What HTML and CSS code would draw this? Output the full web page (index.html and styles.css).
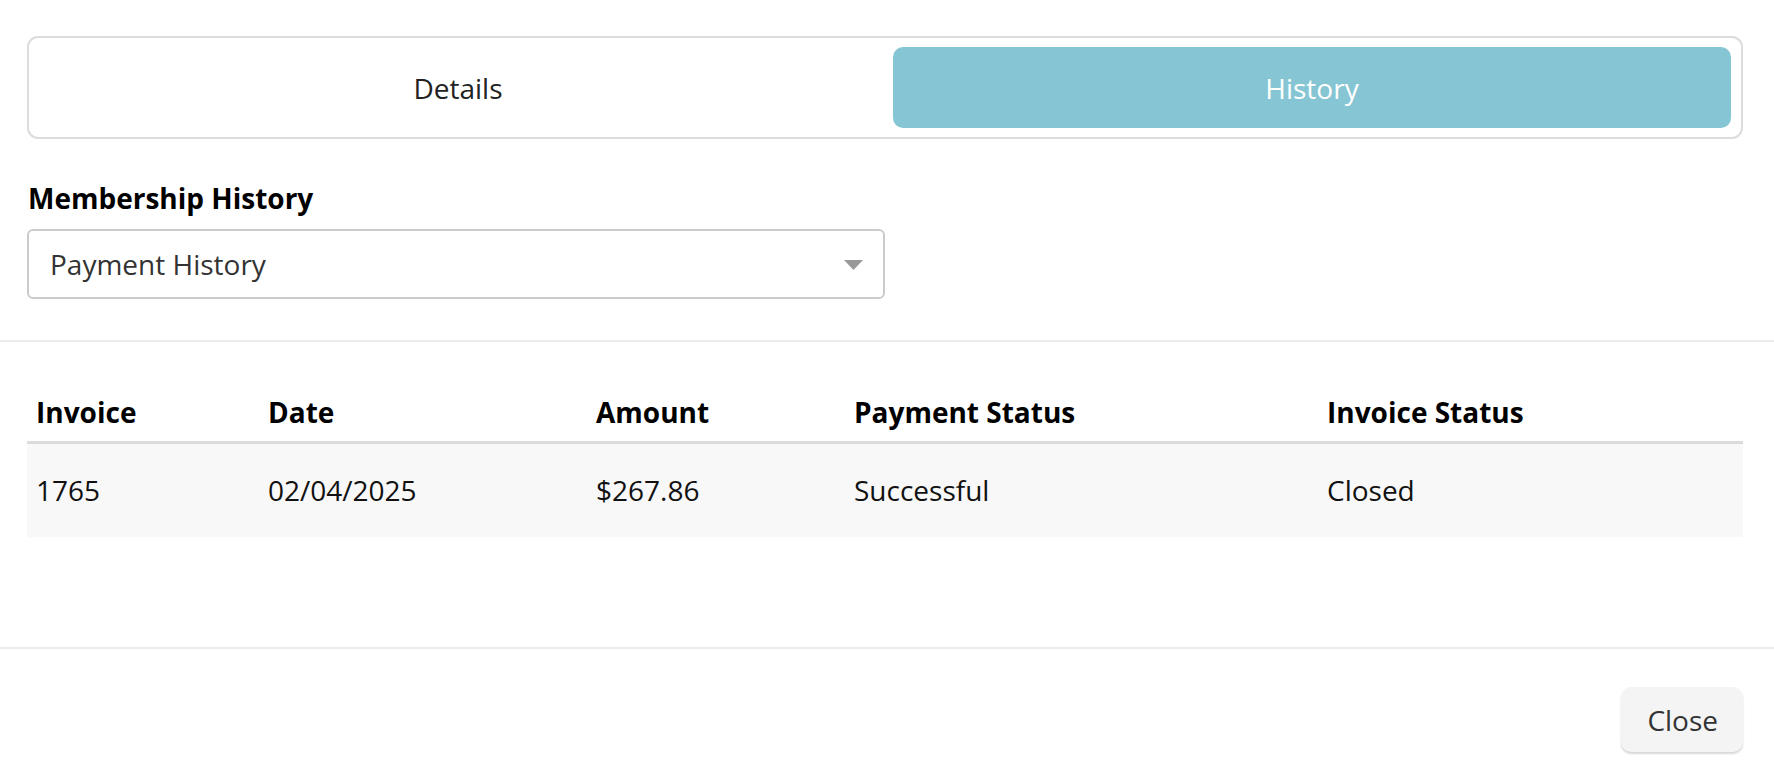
FILE: index.html
```html
<!DOCTYPE html>
<html lang="en">
<head>
<meta charset="utf-8">
<title>Membership History</title>
<link rel="stylesheet" href="styles.css">
</head>
<body>
<div class="modal">
  <section class="top">
    <div class="tabs">
      <button class="tab">Details</button>
      <button class="tab tab-active">History</button>
    </div>
    <label class="field-label">Membership History</label>
    <div class="select">
      <span class="select-value">Payment History</span>
      <svg class="caret" width="19" height="10" viewBox="0 0 19 10"><polygon points="0,0 19,0 9.5,10" fill="#999"/></svg>
    </div>
  </section>
  <div class="divider"></div>
  <section class="table-wrap">
    <table class="history">
      <colgroup>
        <col class="c-invoice">
        <col class="c-date">
        <col class="c-amount">
        <col class="c-pay">
        <col class="c-inv">
      </colgroup>
      <thead>
        <tr>
          <th>Invoice</th>
          <th>Date</th>
          <th>Amount</th>
          <th>Payment Status</th>
          <th>Invoice Status</th>
        </tr>
      </thead>
      <tbody>
        <tr>
          <td>1765</td>
          <td>02/04/2025</td>
          <td>$267.86</td>
          <td>Successful</td>
          <td>Closed</td>
        </tr>
      </tbody>
    </table>
  </section>
  <div class="divider"></div>
  <footer class="footer">
    <button class="btn-close">Close</button>
  </footer>
</div>
</body>
</html>
```

FILE: styles.css
```css
* { box-sizing: border-box; }

html, body {
  margin: 0;
  padding: 0;
  background: #ffffff;
}

body {
  font-family: "Open Sans", "Liberation Sans", sans-serif;
  font-size: 28px;
  line-height: 38px;
  color: #222;
  width: 1774px;
  height: 776px;
  overflow: hidden;
}

.top {
  padding: 36px 31px 41px 27px;
}

.tabs {
  display: flex;
  gap: 16px;
  border: 2px solid #dcdcdc;
  border-radius: 11px;
  padding: 9px 10px;
}

.tab {
  flex: 1 1 0;
  height: 81px;
  border: 0;
  border-radius: 10px;
  background: transparent;
  font-family: inherit;
  font-size: 28px;
  line-height: 38px;
  color: #222;
  padding: 0;
}

.tab-active {
  background: #86c5d3;
  color: #ffffff;
}

.field-label {
  display: block;
  margin-top: 40px;
  font-weight: 700;
  color: #000;
  margin-left: 1px;
}

.select {
  margin-top: 12px;
  width: 858px;
  height: 70px;
  border: 2px solid #cbcbcb;
  border-radius: 6px;
  display: flex;
  align-items: center;
  justify-content: space-between;
  padding: 0 20px 0 21px;
}

.select-value {
  color: #333;
}

.caret {
  display: block;
  margin-top: 2px;
}

.divider {
  height: 2px;
  background: #ebebeb;
}

.table-wrap {
  padding: 41px 31px 110px 27px;
}

.history {
  width: 100%;
  border-collapse: collapse;
  table-layout: fixed;
}

.c-invoice { width: 232px; }
.c-date { width: 328px; }
.c-amount { width: 258px; }
.c-pay { width: 473px; }

.history th {
  text-align: left;
  font-weight: 700;
  color: #000;
  padding: 10px 9px;
  border-bottom: 3px solid #dcdcdc;
}

.history td {
  background: #f8f8f8;
  color: #111;
  padding: 27px 9px 28px;
}

.footer {
  display: flex;
  justify-content: flex-end;
  padding: 38px 31px 0 27px;
}

.btn-close {
  font-family: inherit;
  font-size: 28px;
  line-height: 38px;
  color: #333;
  background: #f4f4f4;
  border: 0;
  border-radius: 10px;
  padding: 14px 25px 13px 26px;
  box-shadow: 0 2px 2px rgba(0, 0, 0, 0.16);
}
```
